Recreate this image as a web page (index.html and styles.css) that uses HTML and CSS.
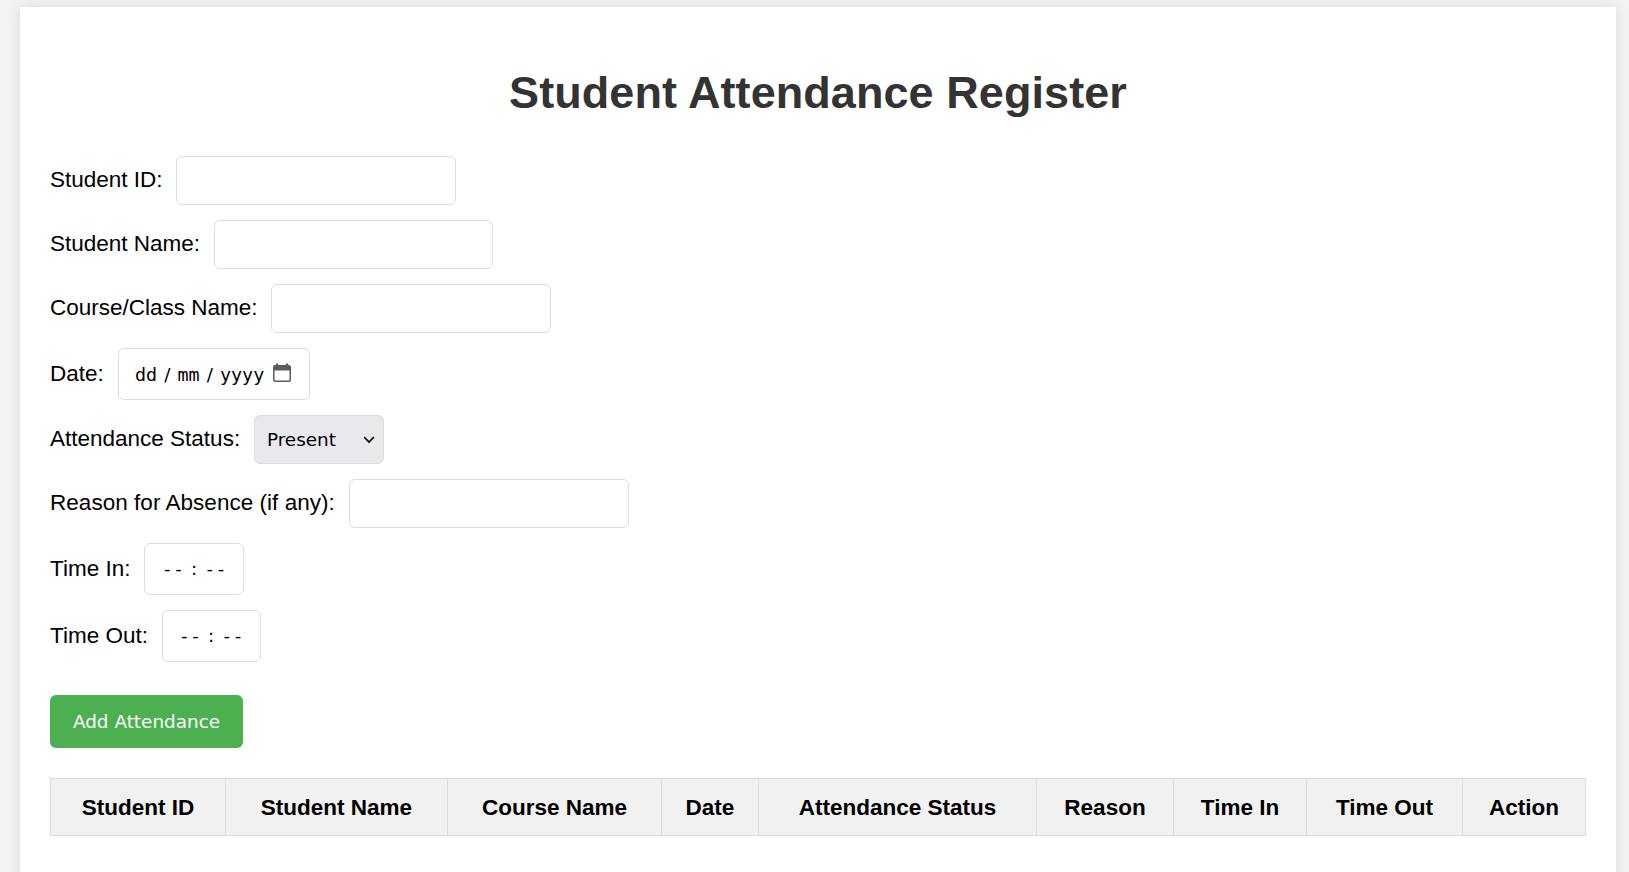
FILE: index.html
```html
<!DOCTYPE html>
<html lang="en">
<head>
<meta charset="utf-8">
<title>Student Attendance Register</title>
<link rel="stylesheet" href="styles.css">
</head>
<body>
<main class="container">
  <h1 class="title">Student Attendance Register</h1>
  <form class="form">
    <div class="row"><label for="sid">Student ID:</label><input class="field" id="sid" type="text"></div>
    <div class="row"><label for="sname">Student Name:</label><input class="field name" id="sname" type="text"></div>
    <div class="row"><label for="course">Course/Class Name:</label><input class="field" id="course" type="text"></div>
    <div class="row tall"><label>Date:</label>
      <div class="picker date"><span>dd</span><i>/</i><span>mm</span><i>/</i><span>yyyy</span>
        <svg class="calendar" viewBox="0 0 18 20"><path fill="#5b5b5f" d="M3 .5h2.200V2h7.600V.5H15V2h.8A2.200 2.200 0 0 1 18 4.200v12.600A2.200 2.200 0 0 1 15.800 19H2.200A2.200 2.200 0 0 1 0 16.800V4.200A2.200 2.200 0 0 1 2.200 2H3zM1.500 7.500v9a1 1 0 0 0 1 1h13a1 1 0 0 0 1-1v-9z"/></svg>
      </div>
    </div>
    <div class="row"><label for="status">Attendance Status:</label>
      <div class="select-wrap"><select class="status" id="status"><option>Present</option><option>Absent</option></select>
        <svg class="chevron" viewBox="0 0 12 8"><path d="M1.200 1.200 6 6l4.800-4.800" fill="none" stroke="#000" stroke-width="1.700"/></svg>
      </div>
    </div>
    <div class="row reason"><label for="reason">Reason for Absence (if any):</label><input class="field" id="reason" type="text"></div>
    <div class="row tall"><label>Time In:</label><div class="picker time"><span>--</span><i>:</i><span>--</span></div></div>
    <div class="row tall"><label>Time Out:</label><div class="picker time out"><span>--</span><i>:</i><span>--</span></div></div>
    <button class="add" type="button">Add Attendance</button>
  </form>
  <table class="register">
    <thead><tr><th>Student ID</th><th>Student Name</th><th>Course Name</th><th>Date</th><th>Attendance Status</th><th>Reason</th><th>Time In</th><th>Time Out</th><th>Action</th></tr></thead>
  </table>
</main>
</body>
</html>
```
FILE: styles.css
```css
* { box-sizing: border-box; }
html { overflow: hidden; }
body {
  margin: 0;
  padding: 7px 13px 0 20px;
  height: 872px;
  overflow: hidden;
  background: #f3f3f3;
  font: 22.5px/26px "Liberation Sans", Arial, sans-serif;
  color: #000;
}
.container {
  height: 900px;
  padding: 30px;
  background: #fff;
  box-shadow: 0 0 15px rgba(0, 0, 0, 0.1);
}
.title {
  margin: 30px 0 38px;
  font-size: 45px;
  line-height: 51px;
  letter-spacing: 0.07px;
  text-align: center;
  color: #333;
}
.form { display: flex; flex-direction: column; align-items: flex-start; gap: 15px; }
.row { display: flex; align-items: center; gap: 13.75px; }
.row label { padding-bottom: 2px; }
.row.tall label { padding-bottom: 0; }
.row.reason label { letter-spacing: 0.035px; }
.field, .picker, .status {
  border: 1px solid #ddd;
  border-radius: 6px;
  background: #fff;
}
.field { width: 280px; height: 49px; padding: 0 14px; }
.field.name { width: 279px; }
.picker {
  display: flex;
  align-items: center;
  height: 52px;
  font: 18.4px/22px "DejaVu Sans Mono", monospace;
}
.picker i { font-family: "DejaVu Sans", sans-serif; font-style: normal; text-align: center; }
.date { width: 192px; padding: 2px 0 0 16.5px; }
.date i { width: 20.3px; }
.calendar { width: 18px; height: 20px; margin: -5px 0 0 9px; }
.time { width: 100px; justify-content: center; }
.time.out { width: 99px; }
.time i { width: 20px; }
.time span { letter-spacing: 0.2px; }
.select-wrap { position: relative; width: 130px; height: 49px; }
.status {
  width: 100%;
  height: 100%;
  padding: 0 12px;
  appearance: none;
  background: #e9e9ed;
  color: #000;
  font: 18.4px "DejaVu Sans", sans-serif;
}
.chevron { position: absolute; right: 9px; top: 21px; width: 12px; height: 8px; }
.add {
  width: 193px;
  height: 53px;
  margin-top: 18px;
  padding: 0;
  border: 0;
  border-radius: 6px;
  background: #4caf50;
  color: #fff;
  font: 18.4px "DejaVu Sans", sans-serif;
}
.register {
  width: 1536px;
  height: 58px;
  margin-top: 30px;
  border-collapse: collapse;
  table-layout: fixed;
}
.register th { padding: 2px 0 0; border: 1px solid #ddd; background: #f1f1f1; }
.register th:nth-child(1) { width: 175px; }
.register th:nth-child(2) { width: 222px; }
.register th:nth-child(3) { width: 214px; }
.register th:nth-child(4) { width: 97px; }
.register th:nth-child(5) { width: 278px; }
.register th:nth-child(6) { width: 137px; }
.register th:nth-child(7) { width: 133px; }
.register th:nth-child(8) { width: 156px; }
```
